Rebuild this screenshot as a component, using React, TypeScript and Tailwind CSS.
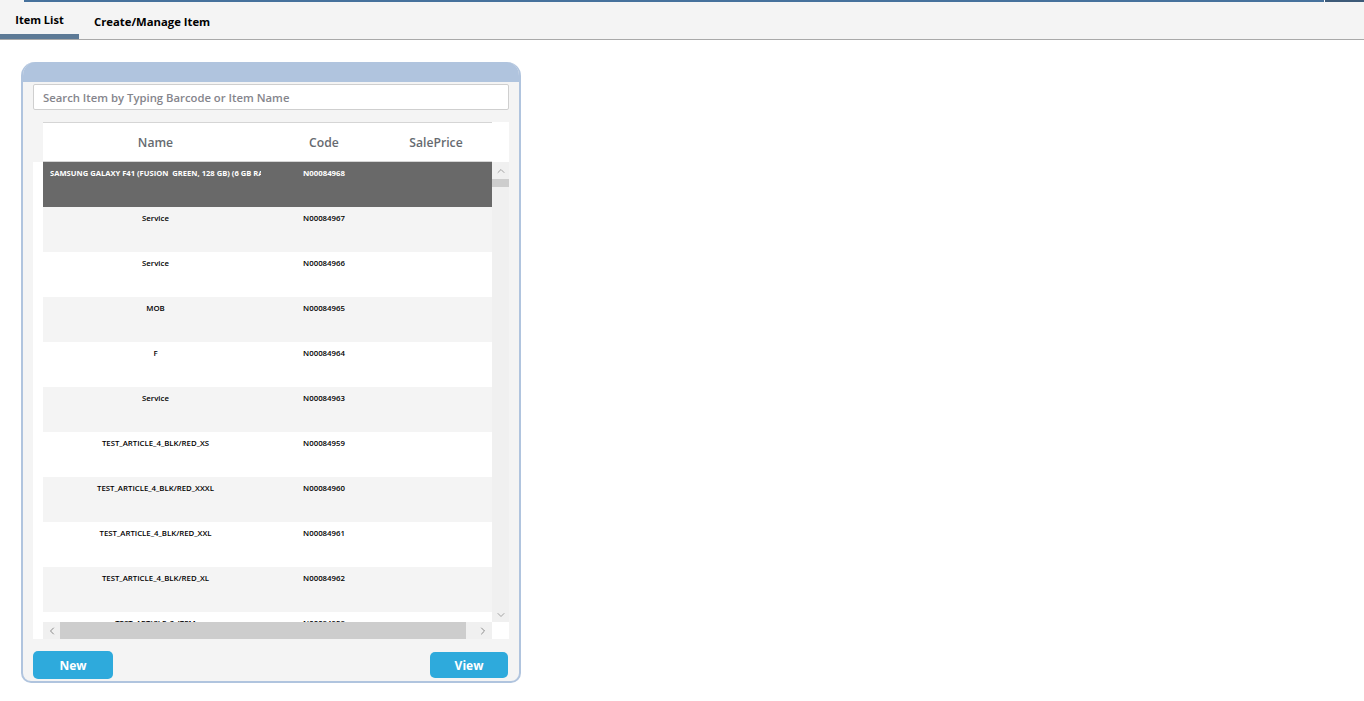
import { ChevronDown, ChevronLeft, ChevronRight, ChevronUp } from 'lucide-react'

const rows = [
  { name: 'SAMSUNG GALAXY F41 (FUSION  GREEN, 128 GB) (6 GB RAM)', code: 'N00084968' },
  { name: 'Service', code: 'N00084967' },
  { name: 'Service', code: 'N00084966' },
  { name: 'MOB', code: 'N00084965' },
  { name: 'F', code: 'N00084964' },
  { name: 'Service', code: 'N00084963' },
  { name: 'TEST_ARTICLE_4_BLK/RED_XS', code: 'N00084959' },
  { name: 'TEST_ARTICLE_4_BLK/RED_XXXL', code: 'N00084960' },
  { name: 'TEST_ARTICLE_4_BLK/RED_XXL', code: 'N00084961' },
  { name: 'TEST_ARTICLE_4_BLK/RED_XL', code: 'N00084962' },
  { name: 'TEST_ARTICLE_3_ITEM', code: 'N00084958' },
]

export default function App() {
  return (
    <div className="h-[701px] w-[1364px] overflow-hidden bg-white font-['Open_Sans','Noto_Sans',sans-serif] text-black">
      <div className="h-[40px] bg-[#f4f4f4] border-b border-[#a9a9a9]">
        <div className="flex h-[2px]">
          <div className="w-[24px]" />
          <div className="w-[1300px] bg-[#46719c]" />
          <div className="w-px bg-white" />
          <div className="flex-1 bg-[#3d5a78]" />
        </div>
        <div className="flex h-[37px]">
          <div className="w-[79px] h-[37px] border-b-[5px] border-[#5d7a96] pt-[9px] text-center text-[11px] leading-[18px] font-bold">
            Item List
          </div>
          <div className="pl-[15px] pt-[11px] text-[11.3px] leading-[18px] font-bold">Create/Manage Item</div>
        </div>
      </div>

      <div className="ml-[21px] mt-[22px] w-[500px] h-[621px] rounded-t-[14px] rounded-b-[10px] overflow-hidden border-x-2 border-b-2 border-[#b0c4de] bg-[#f4f4f4] flex flex-col">
        <div className="h-[20px] shrink-0 bg-[#b0c4de]" />

        <div className="mx-[10px] mt-[2px] h-[26px] shrink-0 w-[476px] rounded-[2px] border border-[#cfcfcf] bg-white pl-[9px] text-[11.3px] leading-[26px] font-semibold text-[#85858c]">
          Search Item by Typing Barcode or Item Name
        </div>

        <div className="mt-[12px] ml-[20px] h-[40px] w-[466px] shrink-0 flex bg-white">
          <div className="w-[449px] flex border-y border-[#d5d5d5] text-[12.2px] leading-[40px] font-semibold text-[#666a70]">
            <div className="w-[225px] text-center">Name</div>
            <div className="w-[112px] text-center">Code</div>
            <div className="w-[112px] text-center">SalePrice</div>
          </div>
        </div>

        <div className="ml-[10px] w-[476px] h-[477px] shrink-0 bg-white pl-[10px] flex flex-col">
          <div className="flex h-[460px]">
            <div className="w-[449px] overflow-hidden">
              {rows.map((r, i) => (
                <div
                  key={r.code}
                  className={`flex h-[45px] shrink-0 pt-[5px] text-[7.8px] leading-[12px] font-semibold ${
                    i === 0 ? 'bg-[#696969] text-white' : i % 2 === 1 ? 'bg-[#f4f4f4]' : 'bg-white'
                  }`}
                >
                  <div className="w-[225px] px-[7px]">
                    <div
                      className={`overflow-hidden whitespace-pre ${i === 0 ? 'text-left text-[7.6px] font-bold' : 'text-center'}`}
                    >
                      {r.name}
                    </div>
                  </div>
                  <div className={`w-[112px] text-center ${i === 0 ? 'font-bold' : ''}`}>{r.code}</div>
                  <div className="w-[112px]" />
                </div>
              ))}
            </div>
            <div className="w-[17px] bg-[#f0f0f0] flex flex-col text-[#a3a3a3]">
              <div className="h-[17px] flex items-center justify-center">
                <ChevronUp size={12} />
              </div>
              <div className="h-[8px] bg-[#cdcdcd]" />
              <div className="flex-1" />
              <div className="h-[17px] pt-[2px] flex items-center justify-center">
                <ChevronDown size={12} />
              </div>
            </div>
          </div>
          <div className="flex h-[17px]">
            <div className="w-[449px] flex bg-[#f0f0f0] text-[#8a8a8a]">
              <div className="w-[17px] flex items-center justify-center">
                <ChevronLeft size={12} />
              </div>
              <div className="w-[406px] bg-[#cdcdcd]" />
              <div className="flex-1 flex items-center justify-end pr-[3px]">
                <ChevronRight size={12} />
              </div>
            </div>
            <div className="w-[17px] bg-white" />
          </div>
        </div>

        <div className="mx-[10px] mt-[12px] flex justify-between items-start text-[12px] font-bold text-white">
          <button className="w-[80px] h-[28px] rounded-[5px] bg-[#2eaadc] leading-[29px]">New</button>
          <button className="w-[78px] h-[26px] mt-px mr-px rounded-[5px] bg-[#2eaadc] leading-[27px]">View</button>
        </div>
      </div>
    </div>
  )
}
